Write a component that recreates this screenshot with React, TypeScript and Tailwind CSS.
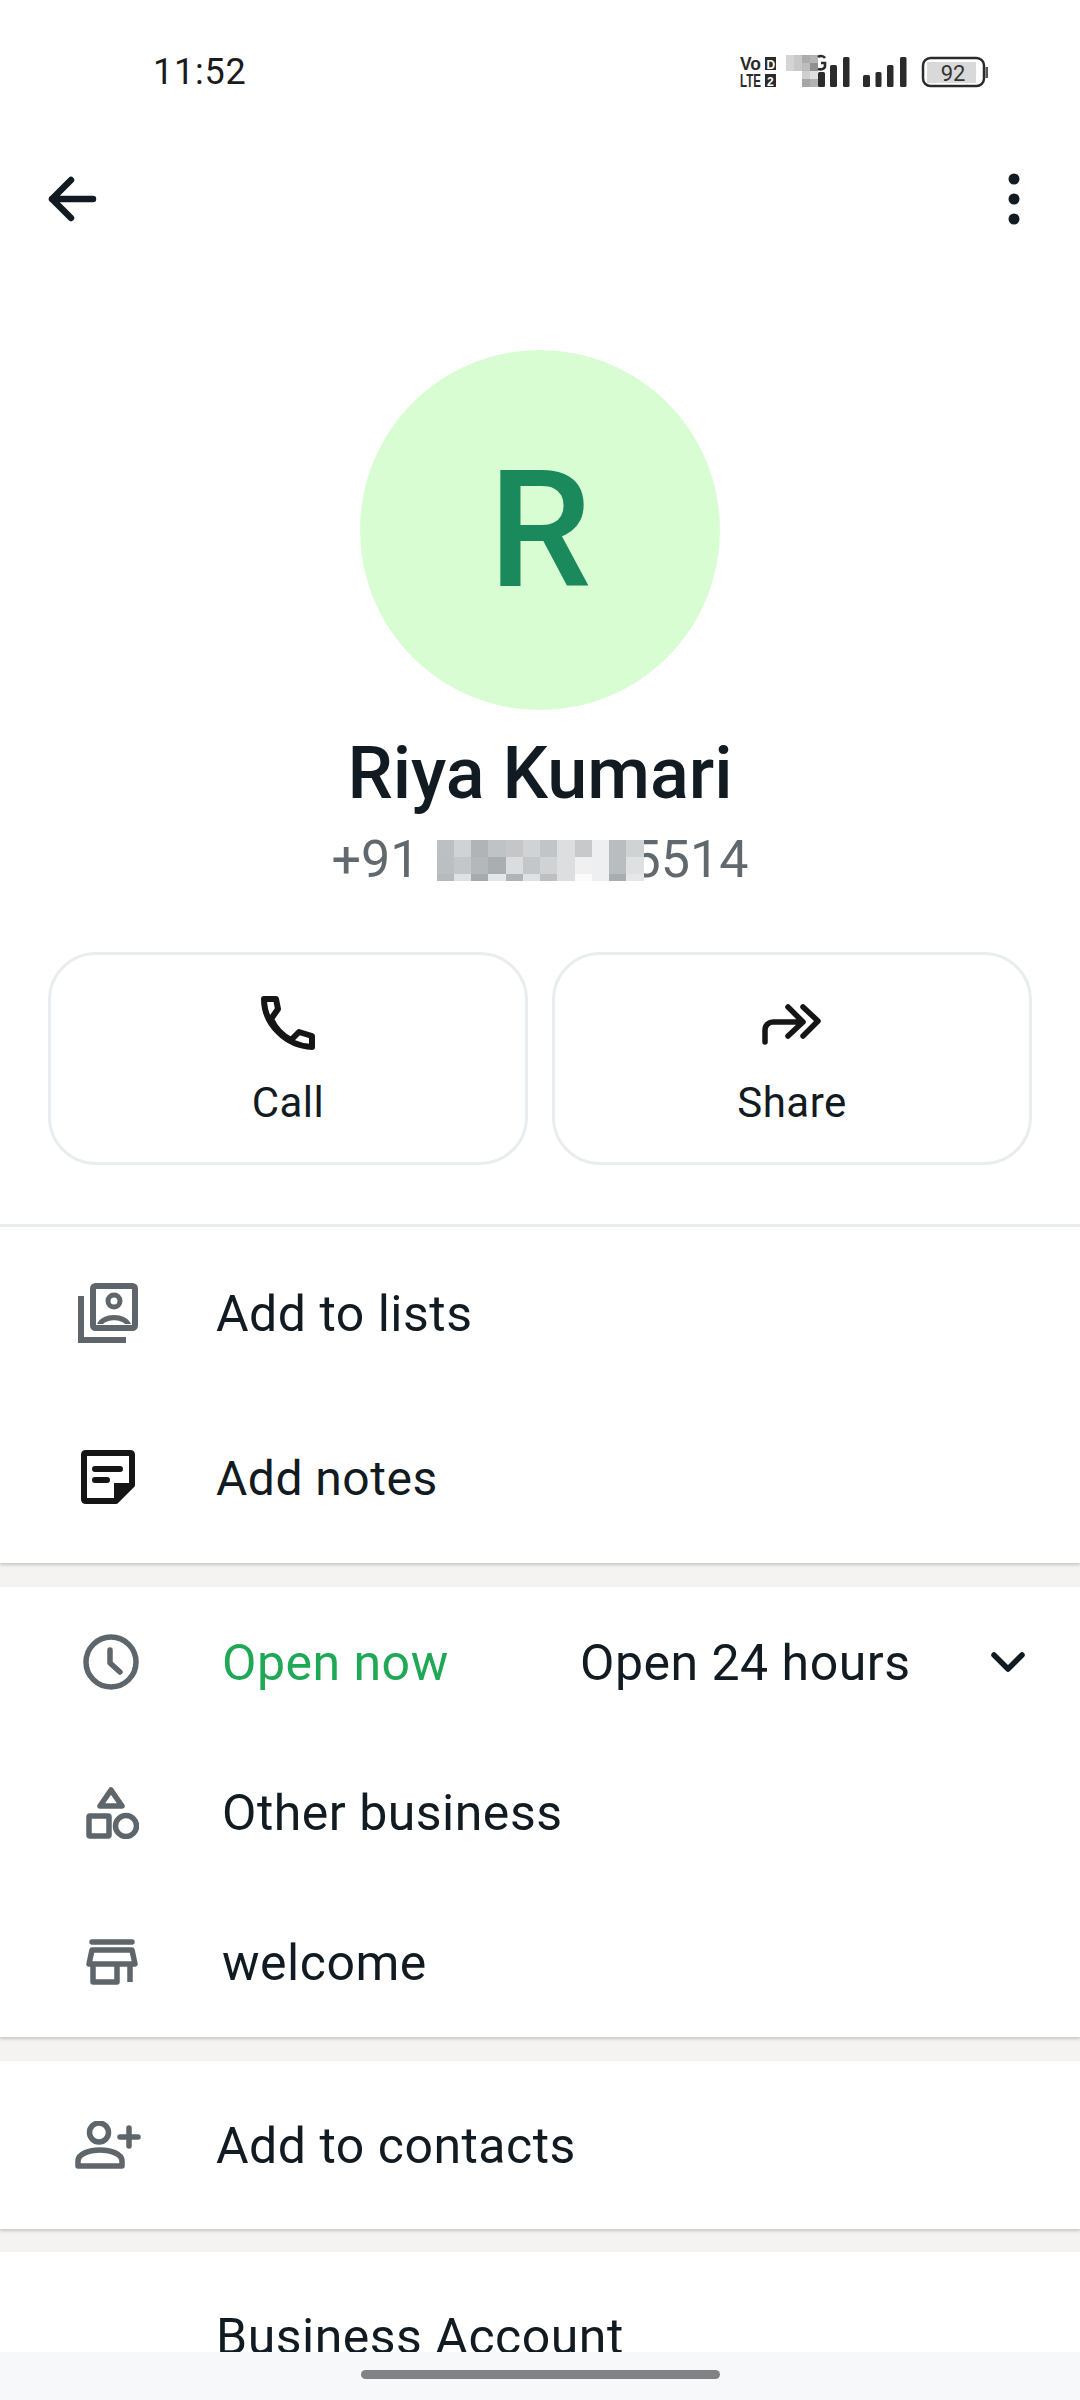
import React from "react";

const mosaicPhone = [
  ["#bdc0c2", "#d0d2d4", "#b0b4b6", "#c0c3c5", "#c4c6c8", "#d0d2d3", "#c2c5c7", "#dcdee0", "#c8c9ca", "#eeeff0", "#babdbf", "#d0d3d4"],
  ["#bcbfc1", "#c4c7c9", "#b4b8ba", "#a9aeb1", "#dadcde", "#c4c7c9", "#d0d2d4", "#dcdee0", "#f0f0f1", "#eeeff0", "#babdbf", "#dfe0e2"],
  ["#b6babc", "#dfe1e3", "#a6abae", "#e4e6e8", "#b0b4b6", "#dfe1e3", "#bcc0c2", "#dcdee0", "#fbfbfb", "#eeeff0", "#a8adb0", "#e6e7e9"],
];
const rowHeights = [17, 17, 7];

function Mosaic() {
  return (
    <div className="relative z-10 flex flex-col w-[207px] h-[41px] shrink-0">
      {mosaicPhone.map((r, i) => (
        <div key={i} className="flex" style={{ height: rowHeights[i] }}>
          {r.map((c, j) => (
            <div key={j} className="flex-1" style={{ background: c }} />
          ))}
        </div>
      ))}
    </div>
  );
}

function StatusIcons() {
  return (
    <svg width="250" height="40" viewBox="0 0 250 40" className="shrink-0">
      <g fill="#2b2b2b" fontFamily="'Liberation Sans',sans-serif" fontWeight="700">
        <text x="0" y="18" fontSize="18" textLength="21" lengthAdjust="spacingAndGlyphs">Vo</text>
        <text x="0" y="35" fontSize="18" textLength="21" lengthAdjust="spacingAndGlyphs">LTE</text>
        <rect x="25" y="5" width="11" height="13" />
        <rect x="25" y="22" width="11" height="13" />
      </g>
      <text x="26.5" y="16.5" fontSize="12" fill="#fff" fontWeight="700" fontFamily="'Liberation Sans',sans-serif">D</text>
      <text x="27" y="33.5" fontSize="12" fill="#fff" fontWeight="700" fontFamily="'Liberation Sans',sans-serif">2</text>
      <g>
        <rect x="46" y="3" width="8" height="16" fill="#d4d4d4" />
        <rect x="54" y="3" width="8" height="16" fill="#c8c8c8" />
        <rect x="62" y="3" width="8" height="8" fill="#acacac" />
        <rect x="70" y="3" width="8" height="8" fill="#b4b4b4" />
        <rect x="62" y="11" width="8" height="8" fill="#bcbcbc" />
        <rect x="70" y="11" width="8" height="8" fill="#909090" />
        <rect x="62" y="19" width="8" height="8" fill="#cfcfcf" />
        <rect x="70" y="19" width="8" height="8" fill="#e0e0e0" />
        <rect x="62" y="27" width="8" height="8" fill="#a6a6a6" />
        <rect x="70" y="27" width="8" height="8" fill="#b2b2b2" />
      </g>
      <path d="M85 6 C 83 3 79 4 78 5 M78 17 C 81 18 85 17 85 14 V11 H81" stroke="#2b2b2b" strokeWidth="2.6" fill="none" />
      <g fill="#2b2b2b">
        <rect x="78" y="20" width="7" height="15" rx="1.5" />
        <rect x="90" y="13" width="7" height="22" rx="1.5" />
        <rect x="103" y="5" width="6.5" height="30" rx="1.5" />
        <rect x="123" y="23" width="7" height="12" rx="1.5" />
        <rect x="135.5" y="20" width="6" height="15" rx="1.5" />
        <rect x="147" y="13" width="6.5" height="22" rx="1.5" />
        <rect x="160" y="5" width="6.5" height="30" rx="1.5" />
      </g>
      <rect x="183" y="6" width="61" height="28" rx="7.5" fill="none" stroke="#2b2b2b" strokeWidth="2.5" />
      <rect x="187" y="10" width="49" height="21" fill="#d9d9d9" />
      <text x="213" y="28.5" textAnchor="middle" fontSize="22" fill="#333" fontFamily="Roboto,sans-serif">92</text>
      <rect x="245.5" y="15" width="2.5" height="11" fill="#555" />
    </svg>
  );
}

const G = "#5f666b";
const label = "text-[50px] leading-none tracking-[0.5px] pt-[2px]";

export default function App() {
  return (
    <div className="w-[1080px] h-[2400px] bg-[#f4f3f2] flex flex-col overflow-hidden font-['Roboto',sans-serif] text-[#111b21]">
      <div className="flex-1 min-h-0 overflow-hidden flex flex-col">
        <div className="bg-white flex flex-col shrink-0">
          {/* status bar */}
          <div className="h-[144px] flex items-center justify-between pl-[153px] pr-[90px] shrink-0">
            <span className="text-[36px] leading-none text-[#1b1b1b] tracking-[0.8px]">11:52</span>
            <StatusIcons />
          </div>
          {/* toolbar */}
          <div className="h-[206px] flex items-start justify-between pl-[46px] pr-[58px] pt-[29px] shrink-0">
            <svg width="54" height="52" viewBox="0 0 54 52" fill="none" stroke="#111b21" strokeWidth="6.5" strokeLinecap="round" strokeLinejoin="round">
              <path d="M6 26 H47 M25 7 L6 26 L25 45" />
            </svg>
            <svg width="16" height="54" viewBox="0 0 16 54" fill="#111b21">
              <circle cx="8" cy="6" r="5.5" />
              <circle cx="8" cy="26" r="5.5" />
              <circle cx="8" cy="46" r="5.5" />
            </svg>
          </div>
          {/* avatar */}
          <div className="self-center w-[360px] h-[360px] rounded-full bg-[#d9fdd3] flex items-center justify-center shrink-0">
            <span className="text-[164px] leading-none font-medium text-[#1a8a5c]">R</span>
          </div>
          <div className="text-center text-[72px] leading-[80px] font-medium mt-[24px]">Riya Kumari</div>
          <div className="flex items-center justify-center text-[52px] leading-[60px] text-[#62696e] mt-[16px] h-[60px]">
            <span>+91</span>
            <span className="w-[17px]" />
            <Mosaic />
            <span className="-ml-[12px]">5514</span>
          </div>
          {/* actions */}
          <div className="flex justify-between pl-[48px] pr-[48px] mt-[62px]">
            <div className="w-[480px] h-[213px] rounded-[48px] border-[3px] border-[#e9edef] flex flex-col items-center pt-[38px]">
              <div className="h-[60px] flex items-center justify-center">
                <svg width="54" height="54" viewBox="0 0 54 54" fill="none" stroke="#151515" strokeWidth="6" strokeLinejoin="round">
                  <path d="M3 3 H15 L17 13 L10 23 C14 32 22 40 30 44 L38 36 L51 40 V51 C25 50 3 28 3 3 Z" />
                </svg>
              </div>
              <span className="text-[42px] leading-[48px] mt-[26px] tracking-[0.5px]">Call</span>
            </div>
            <div className="w-[480px] h-[213px] rounded-[48px] border-[3px] border-[#e9edef] flex flex-col items-center pt-[38px]">
              <div className="h-[60px] flex items-center justify-center pt-[3px]">
                <svg width="60" height="42" viewBox="0 0 60 42" fill="none" stroke="#151515" strokeWidth="5.5" strokeLinecap="round" strokeLinejoin="round">
                  <path d="M3 38 V26 C3 21 7 18 11 18 H41 M26 3 L41 18 L26 32" />
                  <path d="M41 3 L56 17 L41 32" />
                </svg>
              </div>
              <span className="text-[42px] leading-[48px] mt-[26px] tracking-[0.5px]">Share</span>
            </div>
          </div>
          <div className="h-[3px] bg-[#e9edef] mt-[59px]" />
          {/* list 1 */}
          <div className="pt-[4px] pb-[4px] pl-[78px] shadow-[0_2px_3px_rgba(0,0,0,0.18)]">
            <div className="flex items-center h-[164px]">
              <div className="w-[138px] shrink-0">
                <svg width="60" height="60" viewBox="0 0 60 60" fill="none">
                  <path d="M3 13 V57 H48" stroke={G} strokeWidth="6" />
                  <rect x="15" y="3" width="42" height="42" rx="2.5" stroke={G} strokeWidth="6" />
                  <circle cx="36" cy="18" r="6" stroke={G} strokeWidth="5" />
                  <path d="M19 41 C 24 29 48 29 53 41 Z" fill={G} />
                  <path d="M25 41 C 30 36 42 36 47 41 Z" fill="#fff" />
                </svg>
              </div>
              <span className={label}>Add to lists</span>
            </div>
            <div className="flex items-center h-[164px]">
              <div className="w-[138px] shrink-0">
                <svg width="54" height="54" viewBox="0 0 54 54" fill="none" className="ml-[3px]">
                  <path d="M5 3 H49 Q51 3 51 5 V35 L35 51 H5 Q3 51 3 49 V5 Q3 3 5 3 Z" stroke="#151515" strokeWidth="6" strokeLinejoin="round" />
                  <path d="M33 51 V33 H51 V37 L37 51 Z" fill="#151515" />
                  <path d="M14 19 H39 M14 30 H26" stroke="#151515" strokeWidth="6" strokeLinecap="round" />
                </svg>
              </div>
              <span className="text-[48px] leading-none tracking-[0.5px] pt-[3px]">Add notes</span>
            </div>
          </div>
        </div>

        <div className="bg-white mt-[24px] pl-[83px] pr-[54px] shrink-0 shadow-[0_2px_3px_rgba(0,0,0,0.18)]">
          <div className="flex items-center h-[150px]">
            <div className="w-[139px] shrink-0">
              <svg width="56" height="56" viewBox="0 0 56 56" fill="none" stroke={G} strokeWidth="5.5" strokeLinecap="round" strokeLinejoin="round">
                <circle cx="28" cy="28" r="25" />
                <path d="M27 16 V29 L37 38" />
              </svg>
            </div>
            <span className={`${label} text-[#1fa855] w-[358px] shrink-0`}>Open now</span>
            <span className={label}>Open 24 hours</span>
            <svg width="36" height="22" viewBox="0 0 36 22" fill="none" stroke="#111b21" strokeWidth="5.5" strokeLinecap="round" strokeLinejoin="round" className="ml-auto">
              <path d="M4 4 L18 18 L32 4" />
            </svg>
          </div>
          <div className="flex items-center h-[150px]">
            <div className="w-[139px] shrink-0">
              <svg width="53" height="54" viewBox="0 0 53 54" fill="none" stroke={G} strokeWidth="5.5" strokeLinejoin="round" className="ml-[3px]">
                <path d="M25 5 L36 21 H14 Z" />
                <rect x="3" y="31" width="20" height="20" rx="1" />
                <circle cx="40" cy="41" r="10.5" />
              </svg>
            </div>
            <span className={label}>Other business</span>
          </div>
          <div className="flex items-center h-[150px]">
            <div className="w-[139px] shrink-0">
              <svg width="52" height="46" viewBox="0 0 52 46" fill="none" stroke={G} strokeWidth="5.5" strokeLinejoin="round" className="ml-[3px]">
                <path d="M6 3 H46" strokeLinecap="round" />
                <path d="M6 11 H46 L49 25 H3 Z" />
                <path d="M7 25 V43 H31 V25 M44 25 V43" />
              </svg>
            </div>
            <span className={label}>welcome</span>
          </div>
        </div>

        <div className="bg-white mt-[24px] pl-[75px] h-[168px] flex items-center shrink-0 shadow-[0_2px_3px_rgba(0,0,0,0.18)]">
          <svg width="67" height="48" viewBox="0 0 67 48" fill="none" stroke={G} strokeWidth="5.5" strokeLinecap="round" strokeLinejoin="round" className="shrink-0">
            <circle cx="24" cy="11.5" r="9.5" />
            <path d="M3 45 V40 C3 33 14 29 25 29 C36 29 47 33 47 40 V45 Z" />
            <path d="M54 7 V25 M45 16 H63" />
          </svg>
          <span className={`${label} ml-[74px]`}>Add to contacts</span>
        </div>

        <div className="bg-white mt-[23px] pl-[216px] pt-[58px] flex-1 min-h-0">
          <span className={`block ${label}`}>Business Account</span>
        </div>
      </div>
      <div className="h-[48px] bg-[#f7f8fa] shrink-0 flex justify-center pt-[18px]">
        <div className="w-[359px] h-[9px] rounded-full bg-[#808285]" />
      </div>
    </div>
  );
}
